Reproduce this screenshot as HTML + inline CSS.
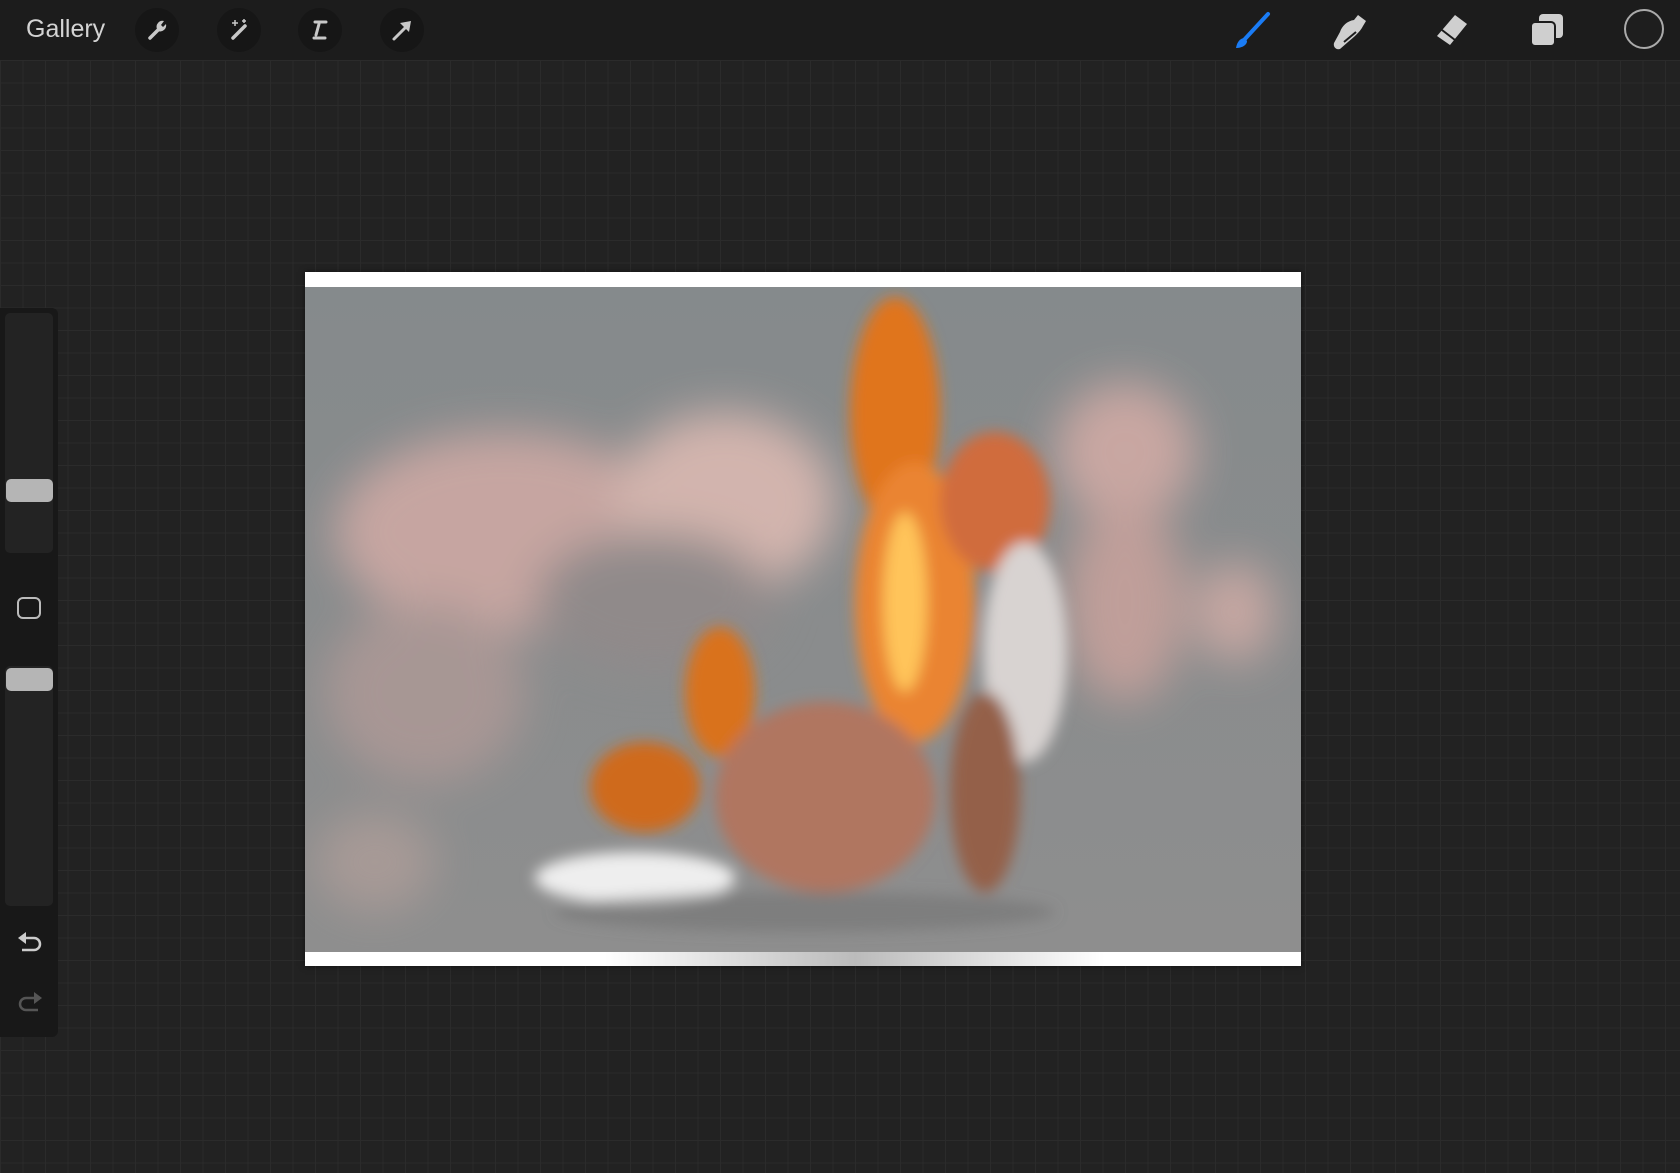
<!DOCTYPE html>
<html><head><meta charset="utf-8"><style>
html,body{margin:0;padding:0;width:1680px;height:1173px;overflow:hidden;background:#232323;font-family:"Liberation Sans",sans-serif}
.grid{position:absolute;left:0;top:60px;width:1680px;height:1113px;background-color:#222;
background-image:linear-gradient(#2b2b2b 1px,transparent 1px),linear-gradient(90deg,#2b2b2b 1px,transparent 1px);background-size:22.5px 22.5px}
.top{position:absolute;left:0;top:0;width:1680px;height:60px;background:#1c1c1c}
.gal{position:absolute;left:26px;top:15px;font-size:25px;color:#d4d4d4}
.btn{position:absolute;top:8px;width:44px;height:44px;border-radius:50%;background:#161616}
.btn svg{position:absolute;left:10px;top:10px}
.side{position:absolute;left:0;top:308px;width:58px;height:729px;background:#181818;border-radius:0 6px 6px 0}
.sl{position:absolute;left:5px;width:48px;background:#232323;border-radius:5px}
.kn{position:absolute;left:6px;width:47px;height:23px;background:#b5b5b5;border-radius:5px}
.canvas{position:absolute;left:305px;top:272px;width:996px;height:694px;background:#fff;box-shadow:0 0 6px rgba(0,0,0,.5)}
</style></head><body>
<div class="grid"></div>
<div class="top">
<div class="gal">Gallery</div>
<div class="btn" style="left:135px"><svg width="24" height="24" viewBox="0 0 24 24"><path d="M5 20 L13 12" stroke="#c8c8c8" stroke-width="3.5" stroke-linecap="round"/><path d="M12 11 A6 6 0 0 1 19 3 L16 7 L18 9 L21 6 A6 6 0 0 1 13 13 Z" fill="#c8c8c8"/></svg></div>
<div class="btn" style="left:217px"><svg width="24" height="24" viewBox="0 0 24 24"><path d="M6 20 L18 8" stroke="#c8c8c8" stroke-width="3.5" stroke-linecap="round"/><path d="M8 2v6M5 5h6M17 1v4M15 3h4" stroke="#c8c8c8" stroke-width="1.5"/></svg></div>
<div class="btn" style="left:298px"><svg width="24" height="24" viewBox="0 0 24 24"><path d="M7 4h11M11 6 L8 17M6 20h11" stroke="#c8c8c8" stroke-width="3" stroke-linecap="round" fill="none"/></svg></div>
<div class="btn" style="left:380px"><svg width="24" height="24" viewBox="0 0 24 24"><path d="M4 21 L17 8" stroke="#c8c8c8" stroke-width="3" stroke-linecap="round"/><path d="M10 5 L21 3 L19 14 Z" fill="#c8c8c8"/></svg></div>
<svg style="position:absolute;left:1228px;top:10px" width="46" height="42" viewBox="0 0 46 42"><path d="M40 4 L16 30" stroke="#1a7cf5" stroke-width="4" stroke-linecap="round"/><path d="M17 28 C12 28 9 32 8 38 C14 38 19 35 19 31 Z" fill="#1a7cf5"/></svg>
<svg style="position:absolute;left:1330px;top:12px" width="42" height="40" viewBox="0 0 42 40"><path d="M28 3 L36 9 L33 14 C30 20 24 25 18 30 L10 37 C6 38 3 35 4 31 L10 20 C12 14 17 9 24 8 Z" fill="#cfcfcf"/><path d="M14 30 L26 20" stroke="#1c1c1c" stroke-width="2"/></svg>
<svg style="position:absolute;left:1428px;top:12px" width="42" height="38" viewBox="0 0 42 38"><path d="M27 3 L39 12 L22 33 L9 24 Z" fill="#cfcfcf"/><path d="M14 18 L27 28" stroke="#1c1c1c" stroke-width="2"/></svg>
<svg style="position:absolute;left:1528px;top:12px" width="38" height="38" viewBox="0 0 38 38"><rect x="11" y="2" width="24" height="24" rx="4" fill="#cfcfcf"/><rect x="3" y="10" width="24" height="24" rx="4" fill="#cfcfcf" stroke="#1c1c1c" stroke-width="2"/></svg>
<div style="position:absolute;left:1624px;top:9px;width:40px;height:40px;border-radius:50%;border:2px solid #aaa;box-sizing:border-box;background:#1e1e1e"></div>
</div>
<div class="side">
<div class="sl" style="top:5px;height:240px"></div>
<div class="kn" style="top:171px"></div>
<div style="position:absolute;left:17px;top:289px;width:24px;height:22px;border:2.5px solid #bbb;border-radius:6px;box-sizing:border-box"></div>
<div class="sl" style="top:358px;height:240px"></div>
<div class="kn" style="top:360px"></div>
<svg style="position:absolute;left:16px;top:622px" width="28" height="24" viewBox="0 0 28 24"><path d="M4 8 H18 A6 6 0 0 1 18 20 H6" fill="none" stroke="#ccc" stroke-width="2.5"/><path d="M2 8 L10 2 L10 14Z" fill="#ccc"/></svg>
<svg style="position:absolute;left:16px;top:682px" width="28" height="24" viewBox="0 0 28 24"><path d="M24 8 H10 A6 6 0 0 0 10 20 H22" fill="none" stroke="#555" stroke-width="2.5"/><path d="M26 8 L18 2 L18 14Z" fill="#555"/></svg>
</div>
<div class="canvas">
<svg style="position:absolute;left:0;top:15px" width="996" height="665" viewBox="0 15 996 665">
<defs>
<filter id="b"><feGaussianBlur stdDeviation="22"/></filter>
<filter id="s"><feGaussianBlur stdDeviation="7"/></filter>
<linearGradient id="bg" x1="0" y1="0" x2="0" y2="1"><stop offset="0" stop-color="#858a8c"/><stop offset="1" stop-color="#8e8e8e"/></linearGradient>
</defs>
<rect x="0" y="15" width="996" height="665" fill="url(#bg)"/>
<g filter="url(#b)" opacity=".85">
<ellipse cx="200" cy="260" rx="170" ry="100" fill="#d1aaa5"/>
<ellipse cx="420" cy="230" rx="110" ry="90" fill="#e0bcb4"/>
<ellipse cx="120" cy="420" rx="100" ry="90" fill="#ad9996"/>
<ellipse cx="820" cy="180" rx="70" ry="70" fill="#d4aca6"/>
<ellipse cx="820" cy="330" rx="60" ry="100" fill="#c9a29c"/>
<ellipse cx="930" cy="340" rx="40" ry="50" fill="#d1aca6"/>
<ellipse cx="350" cy="330" rx="120" ry="70" fill="#928a8a"/>
<ellipse cx="70" cy="590" rx="60" ry="50" fill="#ac9c98"/>
</g>
<g filter="url(#s)">
<ellipse cx="590" cy="140" rx="45" ry="115" fill="#e0741f"/>
<ellipse cx="610" cy="330" rx="60" ry="140" fill="#ea8430"/>
<ellipse cx="415" cy="420" rx="35" ry="65" fill="#d9721f"/>
<ellipse cx="340" cy="515" rx="55" ry="45" fill="#cf6a1d"/>
<ellipse cx="520" cy="525" rx="110" ry="95" fill="#b07660"/>
<ellipse cx="690" cy="230" rx="55" ry="70" fill="#d06c3c"/>
<ellipse cx="720" cy="380" rx="42" ry="110" fill="#d8d3d1"/>
<ellipse cx="680" cy="520" rx="35" ry="100" fill="#94604a"/>
<ellipse cx="330" cy="606" rx="100" ry="26" fill="#eeeeee"/>
<ellipse cx="600" cy="330" rx="22" ry="90" fill="#ffc45a"/>
<ellipse cx="500" cy="640" rx="250" ry="20" fill="#6e6e6e" opacity=".5"/>
</g>
</svg>
<div style="position:absolute;left:300px;top:680px;width:500px;height:14px;background:linear-gradient(90deg,#fff,#bbb 50%,#fff)"></div>
</div>
</body></html>
